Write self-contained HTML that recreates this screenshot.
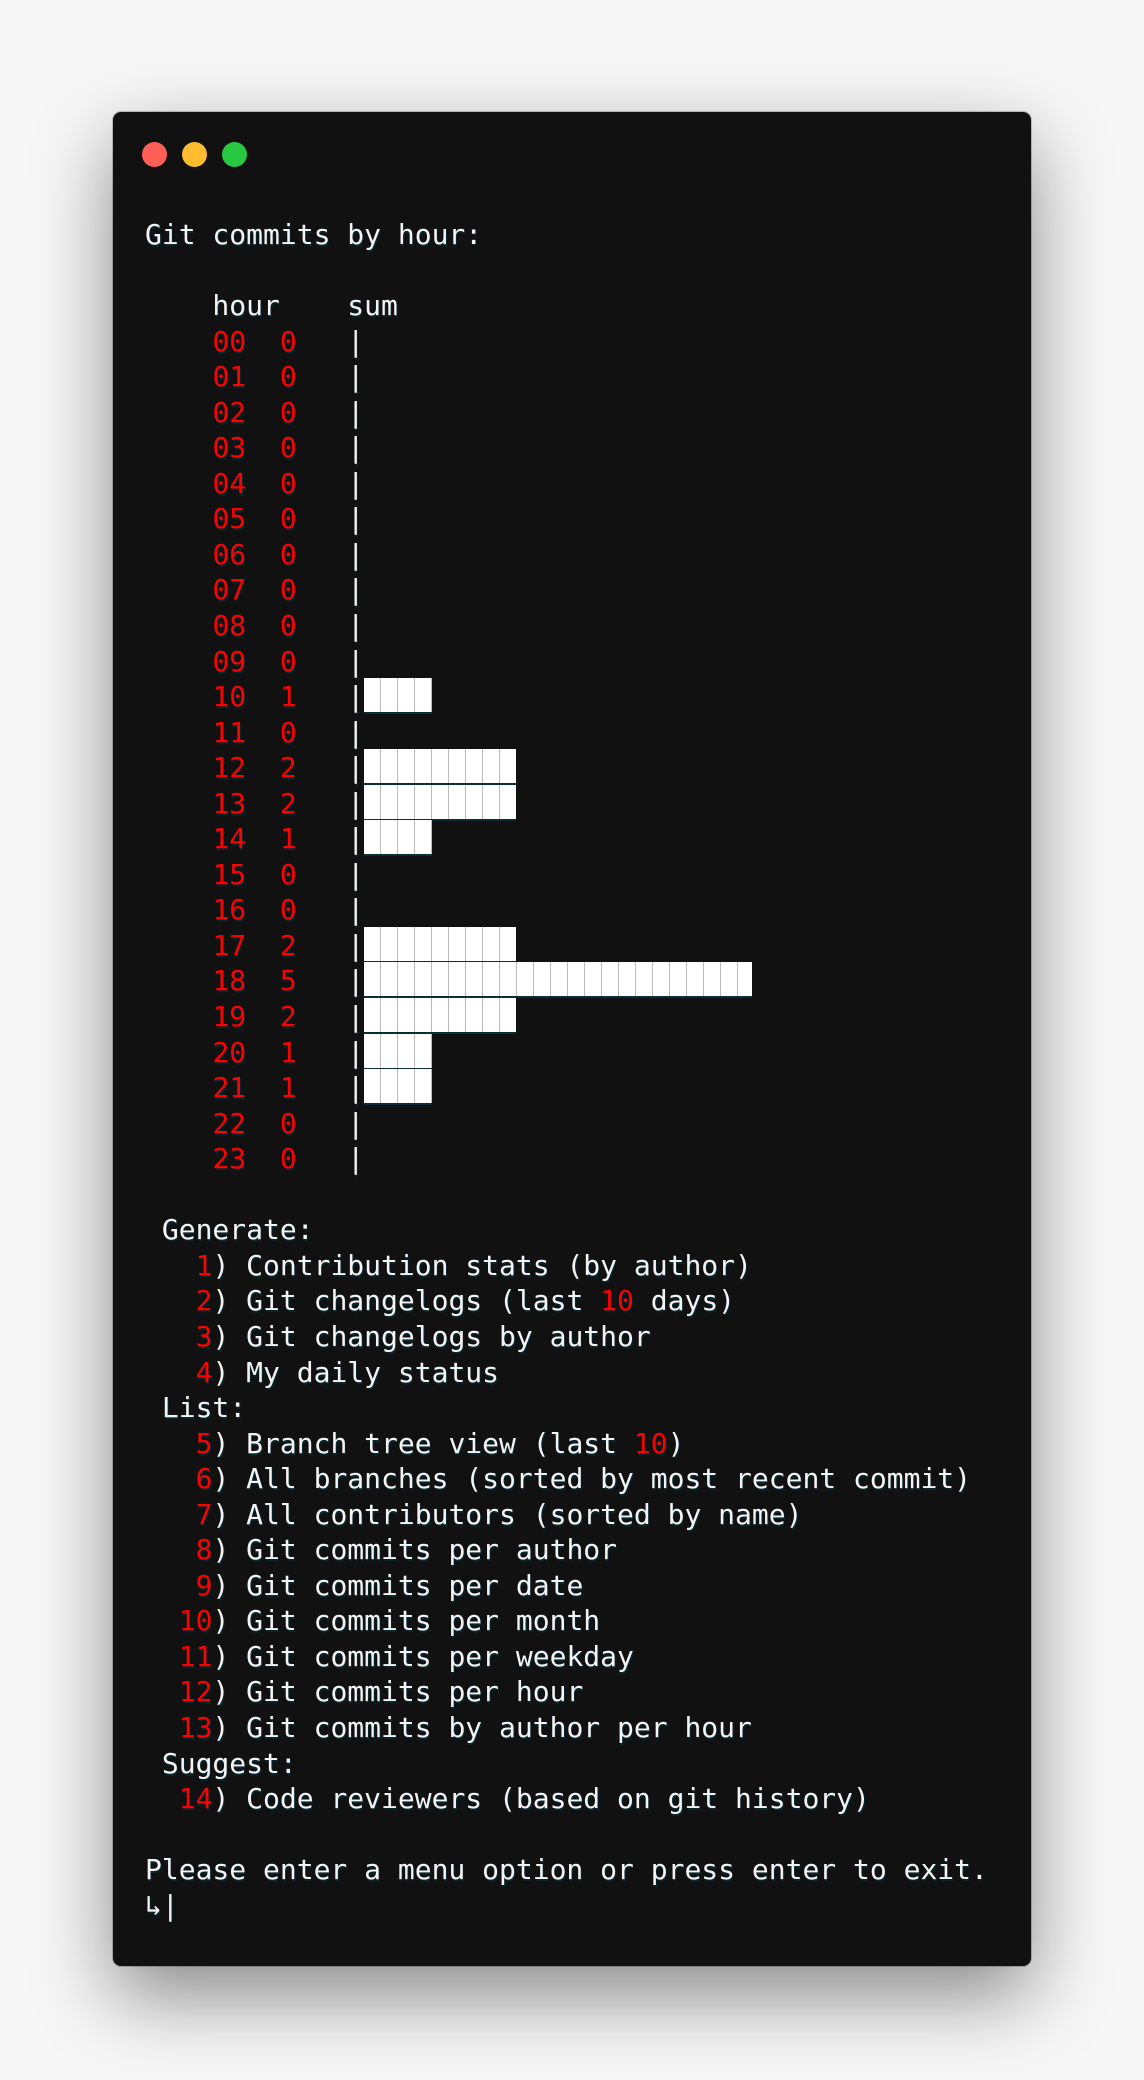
<!DOCTYPE html>
<html><head><meta charset="utf-8"><style>
html,body{margin:0;padding:0}
body{width:1144px;height:2080px;background:#f7f7f7;position:relative;overflow:hidden;font-family:"DejaVu Sans Mono","Liberation Mono",monospace}
.win{position:absolute;left:113px;top:112px;width:918px;height:1854px;background:#111;border-radius:8px;box-shadow:0 30px 80px rgba(0,0,0,.45),0 0 0 1px rgba(0,0,0,.2)}
.dot{position:absolute;top:142px;width:25px;height:25px;border-radius:50%}
pre{position:absolute;left:145px;top:217px;margin:0;font-size:28px;line-height:35.55px;color:#f4f4f4;font-family:inherit;text-shadow:1px 2px 0 #06262e}
.r{color:#f00}
.b{display:inline-block;position:absolute;left:364px;height:34px;margin-top:-1px;background:#fff repeating-linear-gradient(90deg,transparent 0 16px,#bbb 16px 17px);border-bottom:2px solid #0a2d38;box-sizing:content-box}
</style></head><body>
<div class="win"></div>
<div class="dot" style="left:142px;background:#ff5f57"></div>
<div class="dot" style="left:182px;background:#febc2e"></div>
<div class="dot" style="left:222px;background:#28c840"></div>
<pre>Git commits by hour:

    hour    sum
    <span class="r">00  0</span>   |
    <span class="r">01  0</span>   |
    <span class="r">02  0</span>   |
    <span class="r">03  0</span>   |
    <span class="r">04  0</span>   |
    <span class="r">05  0</span>   |
    <span class="r">06  0</span>   |
    <span class="r">07  0</span>   |
    <span class="r">08  0</span>   |
    <span class="r">09  0</span>   |
    <span class="r">10  1</span>   |<span class="b" style="width:68px;left:219px"></span>
    <span class="r">11  0</span>   |
    <span class="r">12  2</span>   |<span class="b" style="width:152px;left:219px"></span>
    <span class="r">13  2</span>   |<span class="b" style="width:152px;left:219px"></span>
    <span class="r">14  1</span>   |<span class="b" style="width:68px;left:219px"></span>
    <span class="r">15  0</span>   |
    <span class="r">16  0</span>   |
    <span class="r">17  2</span>   |<span class="b" style="width:152px;left:219px"></span>
    <span class="r">18  5</span>   |<span class="b" style="width:388px;left:219px"></span>
    <span class="r">19  2</span>   |<span class="b" style="width:152px;left:219px"></span>
    <span class="r">20  1</span>   |<span class="b" style="width:68px;left:219px"></span>
    <span class="r">21  1</span>   |<span class="b" style="width:68px;left:219px"></span>
    <span class="r">22  0</span>   |
    <span class="r">23  0</span>   |

 Generate:
   <span class="r">1</span>) Contribution stats (by author)
   <span class="r">2</span>) Git changelogs (last <span class="r">10</span> days)
   <span class="r">3</span>) Git changelogs by author
   <span class="r">4</span>) My daily status
 List:
   <span class="r">5</span>) Branch tree view (last <span class="r">10</span>)
   <span class="r">6</span>) All branches (sorted by most recent commit)
   <span class="r">7</span>) All contributors (sorted by name)
   <span class="r">8</span>) Git commits per author
   <span class="r">9</span>) Git commits per date
  <span class="r">10</span>) Git commits per month
  <span class="r">11</span>) Git commits per weekday
  <span class="r">12</span>) Git commits per hour
  <span class="r">13</span>) Git commits by author per hour
 Suggest:
  <span class="r">14</span>) Code reviewers (based on git history)

Please enter a menu option or press enter to exit.
↳|</pre>
</body></html>
